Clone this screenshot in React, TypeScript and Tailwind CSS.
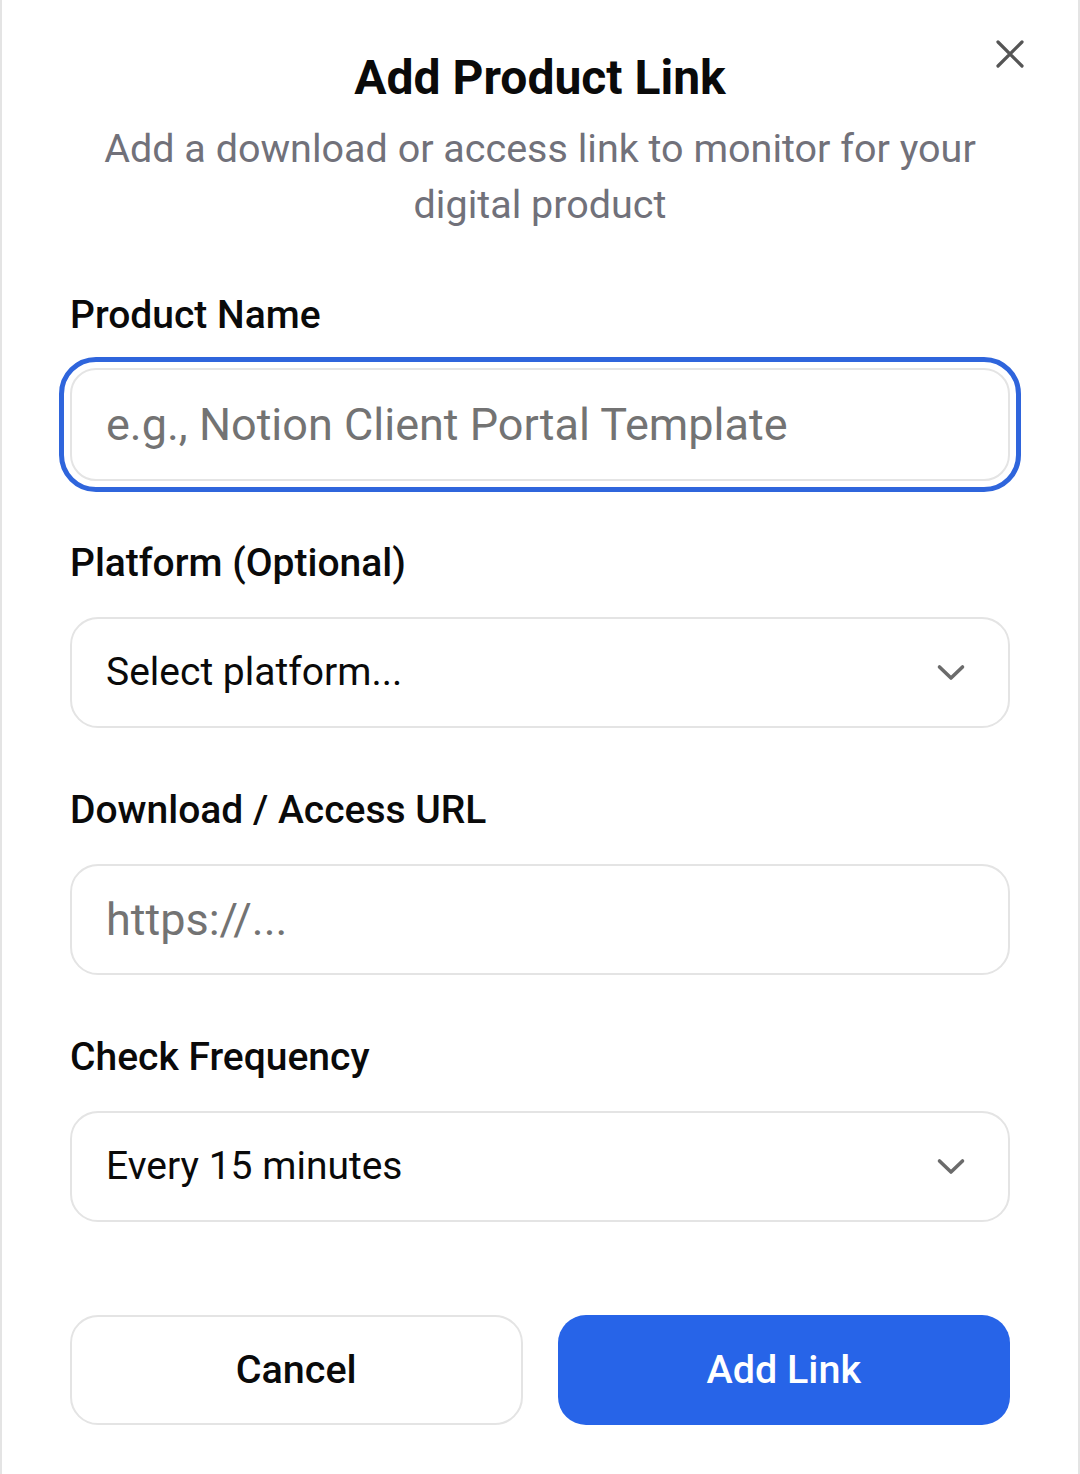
import React from "react";

function Chevron() {
  return (
    <svg width="30" height="19" viewBox="0 0 30 19" fill="none" className="shrink-0">
      <polyline points="3.5,4 15,15 26.5,4" stroke="#6b6b6b" strokeWidth="3.6" strokeLinecap="round" strokeLinejoin="round" />
    </svg>
  );
}

function Label({ children }: { children: React.ReactNode }) {
  return <div className="text-[39px] font-medium leading-[44px] text-[#0a0a0a]">{children}</div>;
}

export default function App() {
  return (
    <div className="flex min-h-[1474px] w-full bg-white font-['Roboto',sans-serif]">
      <div className="relative flex-1 border-x-2 border-[#e4e4e4] px-[68px] pt-[48px]">
        <button className="absolute right-[52px] top-[38px] flex h-[32px] w-[32px] items-center justify-center">
          <svg width="30" height="30" viewBox="0 0 30 30" fill="none">
            <path d="M3 3 L27 27 M27 3 L3 27" stroke="#555555" strokeWidth="3.2" strokeLinecap="round" />
          </svg>
        </button>
        <h1 className="text-center text-[48px] font-bold leading-[60px] text-[#0a0a0a]">
          Add Product Link
        </h1>
        <p className="mt-[13px] text-center text-[39.5px] leading-[56px] text-[#71717a]">
          Add a download or access link to monitor for your digital product
        </p>

        <div className="mt-[60px] flex flex-col gap-[60px]">
          <div className="flex flex-col gap-[31px]">
            <Label>Product Name</Label>
            <div className="flex h-[113px] items-center rounded-[26px] border-2 border-[#e4e4e4] pl-[34px] outline-[5px] outline-offset-[6px] outline-[#2f65dc] outline-solid">
              <span className="text-[45px] text-[#737373]">e.g., Notion Client Portal Template</span>
            </div>
          </div>

          <div className="flex flex-col gap-[32px]">
            <Label>Platform (Optional)</Label>
            <div className="flex h-[111px] items-center justify-between rounded-[28px] border-2 border-[#e4e4e4] pl-[34px] pr-[42px]">
              <span className="text-[39px] text-[#0a0a0a]">Select platform...</span>
              <Chevron />
            </div>
          </div>

          <div className="flex flex-col gap-[32px]">
            <Label>Download / Access URL</Label>
            <div className="flex h-[111px] items-center rounded-[28px] border-2 border-[#e4e4e4] pl-[34px]">
              <span className="text-[45px] text-[#737373]">https://...</span>
            </div>
          </div>

          <div className="flex flex-col gap-[32px]">
            <Label>Check Frequency</Label>
            <div className="flex h-[111px] items-center justify-between rounded-[28px] border-2 border-[#e4e4e4] pl-[34px] pr-[42px]">
              <span className="text-[39px] text-[#0a0a0a]">Every 15 minutes</span>
              <Chevron />
            </div>
          </div>
        </div>

        <div className="mt-[93px] grid grid-cols-2 gap-[35px]">
          <button className="flex h-[110px] items-center justify-center rounded-[28px] border-2 border-[#e4e4e4] bg-white text-[39.5px] font-medium text-[#0a0a0a]">
            Cancel
          </button>
          <button className="flex h-[110px] items-center justify-center rounded-[28px] bg-[#2764e8] text-[39.5px] font-medium text-white">
            Add Link
          </button>
        </div>
      </div>
    </div>
  );
}
